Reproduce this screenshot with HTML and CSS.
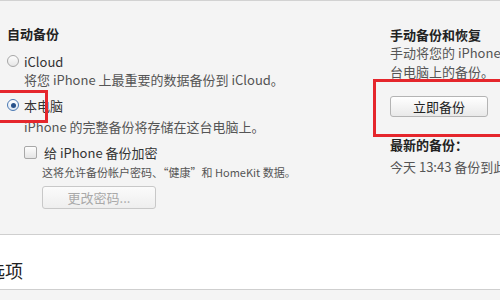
FILE: index.html
```html
<!DOCTYPE html>
<html lang="zh-CN">
<head>
    <meta charset="UTF-8">
    <title>备份</title>
    <link rel="stylesheet" href="styles.css">
</head>
<body>

<div class="backup-panel">
    <div class="col-auto">
        <h2 class="section-title">自动备份</h2>

        <label class="option">
            <span class="radio"></span>
            <span>iCloud</span>
        </label>
        <p class="desc">将您 iPhone 上最重要的数据备份到 iCloud。</p>

        <label class="option option-pc">
            <span class="radio radio-on"></span>
            <span>本电脑</span>
        </label>
        <p class="desc desc-pc">iPhone 的完整备份将存储在这台电脑上。</p>

        <label class="check-row">
            <span class="checkbox"></span>
            <span>给 iPhone 备份加密</span>
        </label>
        <p class="small">这将允许备份帐户密码、“健康”和 HomeKit 数据。</p>
        <button class="btn btn-disabled">更改密码...</button>
    </div>

    <div class="col-manual">
        <h2 class="section-title manual-title">手动备份和恢复</h2>
        <p class="desc manual-desc">手动将您的 iPhone 备份到这<br>台电脑上的备份。</p>
        <button class="btn btn-now">立即备份</button>
        <h3 class="latest-title">最新的备份：</h3>
        <p class="desc latest">今天 13:43 备份到此电脑</p>
    </div>

    <!-- red annotation boxes -->
    <div class="mark mark-pc"></div>
    <div class="mark mark-now"></div>
</div>

<div class="options-bar">
    <h2 class="options-title">选项</h2>
</div>

</body>
</html>
```

FILE: styles.css
```css
body {
    margin: 0;
    background-color: #f4f4f4;
    font-family: "Noto Sans CJK SC", "Noto Sans", sans-serif;
    color: #333;
    overflow: hidden;
    width: 500px;
    height: 300px;
}

.backup-panel {
    position: relative;
    display: flex;
    height: 235px;
    box-sizing: border-box;
    border-top: 1px solid #d2d2d2;
    border-bottom: 1px solid #cfcfcf;
    background-color: #f4f4f4;
}

.col-auto {
    width: 390px;
    padding: 24px 0 0 7px;
    box-sizing: border-box;
    flex-shrink: 0;
}

.col-manual {
    padding: 26px 0 0 0;
    white-space: nowrap;
}

.section-title {
    margin: 0 0 9px;
    font-size: 13px;
    line-height: 18px;
    font-weight: bold;
    color: #222;
}

.option {
    display: flex;
    align-items: center;
    gap: 5px;
    height: 18px;
    font-size: 13px;
    color: #333;
}

.option-pc {
    margin-top: 7px;
}

.radio {
    width: 10px;
    height: 10px;
    border-radius: 50%;
    border: 1px solid #a6a6a6;
    background: linear-gradient(#fdfdfd, #e6e6e6);
    display: flex;
    align-items: center;
    justify-content: center;
}

.radio-on {
    border-color: #4a78b3;
    background: linear-gradient(#ffffff, #dde7f3);
}

.radio-on::after {
    content: "";
    width: 5px;
    height: 5px;
    border-radius: 50%;
    background-color: #27518a;
}

.desc {
    margin: 0 0 0 17px;
    font-size: 13px;
    line-height: 19px;
    color: #555;
    white-space: nowrap;
}

.desc-pc {
    margin-top: 3px;
}

.check-row {
    display: flex;
    align-items: center;
    gap: 7px;
    height: 18px;
    margin: 7px 0 0 17px;
    font-size: 13px;
    color: #333;
}

.checkbox {
    width: 11px;
    height: 11px;
    border: 1px solid #a8a8a8;
    border-radius: 2px;
    background: linear-gradient(#fdfdfd, #e4e4e4);
}

.small {
    margin: 3px 0 0 35px;
    font-size: 11px;
    line-height: 16px;
    color: #555;
    white-space: nowrap;
}

.btn {
    font-family: "Noto Sans CJK SC", "Noto Sans", sans-serif;
    font-size: 13px;
    border: 1px solid #b4b4b4;
    border-radius: 3px;
    background: linear-gradient(#ffffff, #e9e9e9);
    color: #222;
    padding: 0;
}

.btn-disabled {
    display: block;
    margin: 6px 0 0 35px;
    width: 114px;
    height: 23px;
    color: #a9a9a9;
    border-color: #c8c8c8;
    background: linear-gradient(#fbfbfb, #eeeeee);
}

.manual-title {
    line-height: 16px;
    margin: 0;
}

.manual-desc {
    margin: 0;
}

.btn-now {
    display: block;
    margin-top: 15px;
    width: 98px;
    height: 21px;
}

.latest-title {
    margin: 20px 0 0;
    font-size: 13px;
    line-height: 16px;
    font-weight: bold;
    color: #222;
}

.latest {
    margin: 4px 0 0;
}

.mark {
    position: absolute;
    border: 3px solid #e5262c;
}

.mark-pc {
    left: -3px;
    top: 89px;
    width: 45px;
    height: 27px;
}

.mark-now {
    left: 373px;
    top: 78px;
    width: 140px;
    height: 52px;
}

.options-bar {
    height: 54px;
    background-color: #fff;
    border-bottom: 1px solid #cfcfcf;
    display: flex;
    align-items: center;
}

.options-title {
    margin: 16px 0 0;
    text-indent: -13px;
    font-size: 18px;
    font-weight: normal;
    line-height: 20px;
    color: #222;
}
```
